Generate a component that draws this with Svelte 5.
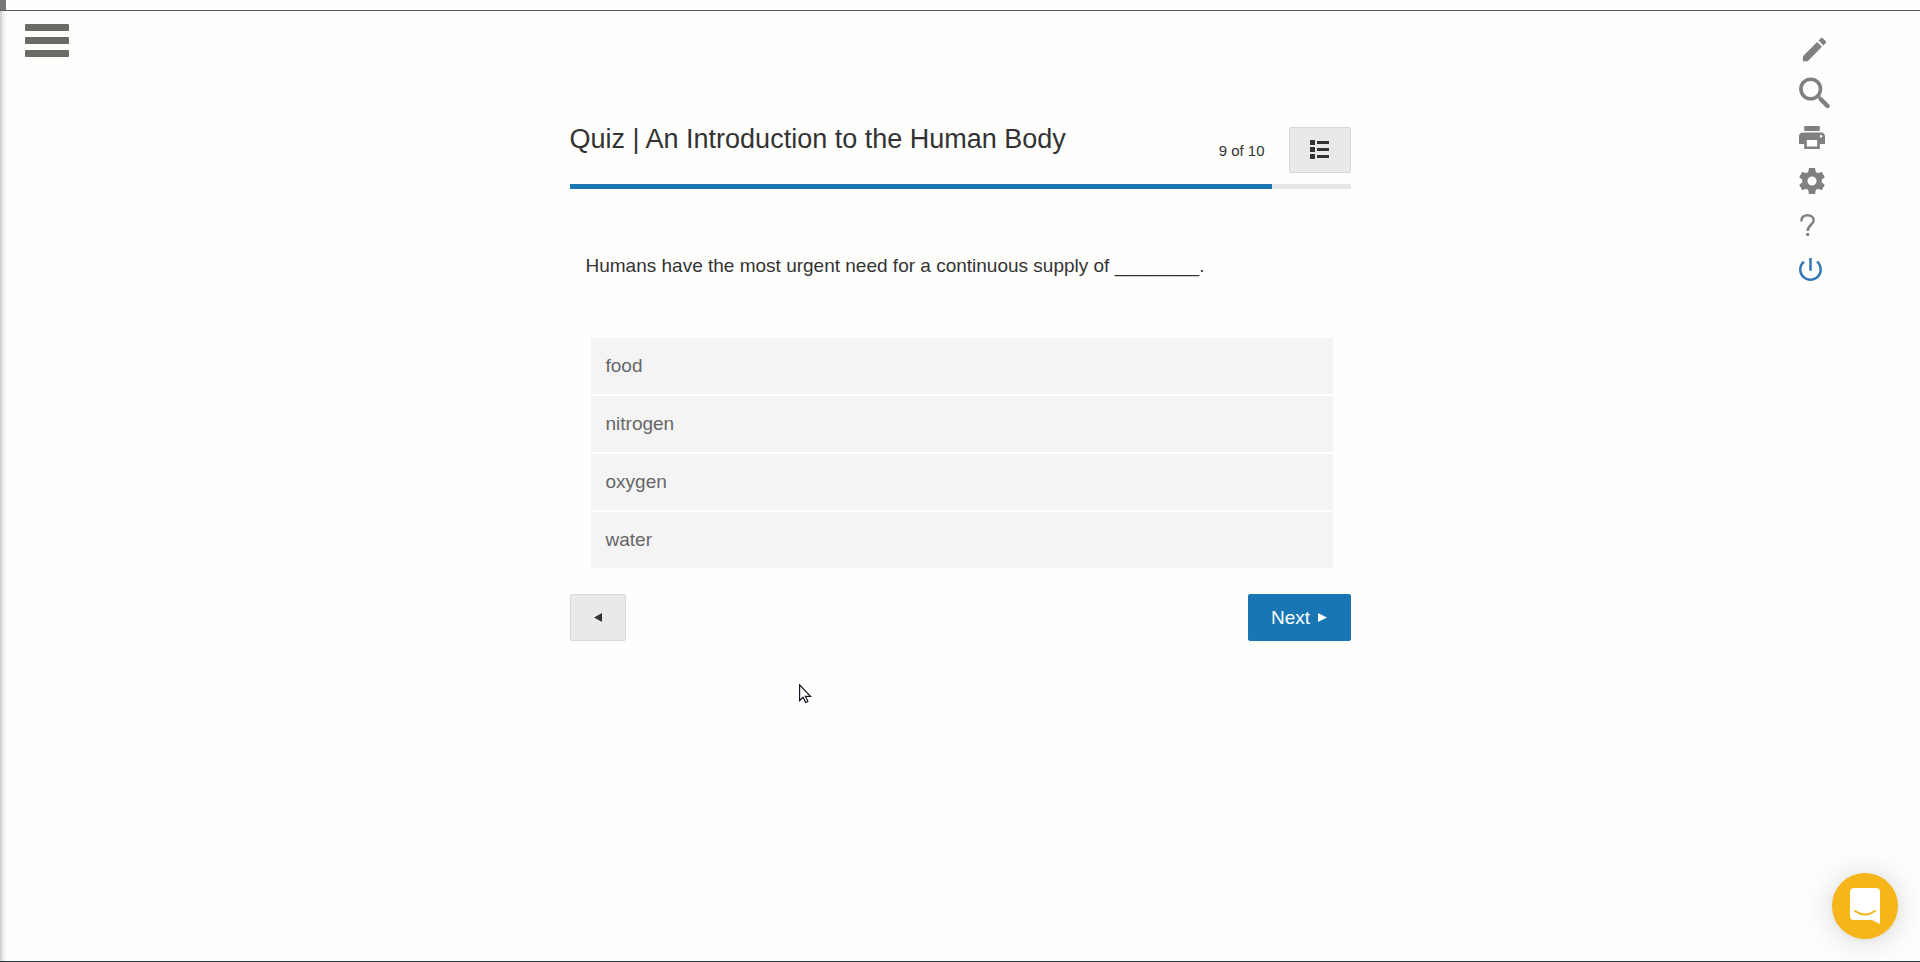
<script lang="ts">
  const total = 10;
  const answers = ["food", "nitrogen", "oxygen", "water"];

  let current: number = $state(9);
  let selected: string = $state("");
  let progress: number = $derived((current / total) * 100);

  function goPrev() {
    if (current > 1) current -= 1;
  }

  function goNext() {
    if (current < total) current += 1;
  }
</script>

<div class="page">
  <div class="top-strip"><div class="strip-corner"></div></div>

  <div class="content">
    <div class="left-side">
      <button class="menu-btn" aria-label="Menu">
        <span></span>
        <span></span>
        <span></span>
      </button>
    </div>

    <main class="quiz">
      <header class="quiz-header">
        <h1>Quiz | An Introduction to the Human Body</h1>
        <div class="quiz-status">
          <span class="count">{current} of {total}</span>
          <button class="btn list-btn" aria-label="Question list">
            <svg width="20" height="20" viewBox="0 0 20 20" fill="#333">
              <path d="M0 0h5v5H0zM0 7h5v5H0zM0 14h5v5H0zM7 1h12v3H7zM7 8h12v3H7zM7 15h12v3H7z" />
            </svg>
          </button>
        </div>
      </header>
      <div class="progress"><div class="progress-fill" style="width: {progress}%;"></div></div>

      <p class="question" id="question">Humans have the most urgent need for a continuous supply of ________.</p>

      <div class="answers" role="radiogroup" aria-labelledby="question">
        {#each answers as a}
          <label class="answer">
            <input type="radio" name="answer" value={a} bind:group={selected} />
            {a}
          </label>
        {/each}
      </div>

      <div class="nav">
        <button class="btn prev-btn" aria-label="Previous" onclick={goPrev}>
          <svg width="8" height="9" viewBox="0 0 8 9"><path fill="#333" d="M8 0v9L0 4.500z" /></svg>
        </button>
        <button class="btn next-btn" onclick={goNext}>
          Next
          <svg width="9" height="9" viewBox="0 0 9 9"><path fill="#fff" d="M0 0v9l9-4.500z" /></svg>
        </button>
      </div>
    </main>

    <div class="tools">
      <button aria-label="Edit">
        <svg width="31" height="31" viewBox="0 0 24 24">
          <path d="M3 17.250V21h3.750L17.810 9.940l-3.750-3.750L3 17.250zM20.710 7.040c.39-.39.39-1.020 0-1.410l-2.340-2.340c-.39-.39-1.020-.39-1.410 0l-1.830 1.830 3.750 3.750 1.830-1.830z" />
        </svg>
      </button>
      <button aria-label="Search">
        <svg width="32" height="32" viewBox="0 0 32 32" fill="none" stroke="#808080">
          <circle cx="11.700" cy="12" r="9.800" stroke-width="3.600" />
          <path d="M19 19l3 3" stroke-width="3" />
          <path d="M22 22.500l6.500 6.500" stroke-width="4.500" stroke-linecap="round" />
        </svg>
      </button>
      <button aria-label="Print">
        <svg width="26" height="23" viewBox="2 3 20 18" preserveAspectRatio="none">
          <path d="M19 8H5c-1.660 0-3 1.340-3 3v6h4v4h12v-4h4v-6c0-1.660-1.340-3-3-3zm-3 11H8v-5h8v5zm3-7c-.55 0-1-.45-1-1s.45-1 1-1 1 .45 1 1-.45 1-1 1zm-1-9H6v4h12V3z" />
        </svg>
      </button>
      <button aria-label="Settings">
        <svg width="26" height="26" viewBox="2 2 20 20">
          <path d="M19.430 12.980c.04-.32.07-.64.07-.98s-.03-.66-.07-.98l2.110-1.650c.19-.15.24-.42.12-.64l-2-3.460c-.12-.22-.39-.3-.61-.22l-2.490 1c-.52-.4-1.080-.73-1.690-.98l-.38-2.650C14.460 2.180 14.250 2 14 2h-4c-.25 0-.46.18-.49.42l-.38 2.650c-.61.25-1.170.59-1.690.98l-2.490-1c-.23-.09-.49 0-.61.22l-2 3.460c-.13.22-.07.49.12.64l2.110 1.650c-.04.32-.07.65-.07.98s.03.66.07.98l-2.110 1.650c-.19.15-.24.42-.12.64l2 3.460c.12.22.39.3.61.22l2.490-1c.52.4 1.080.73 1.690.98l.38 2.650c.03.24.24.42.49.42h4c.25 0 .46-.18.49-.42l.38-2.650c.61-.25 1.170-.59 1.690-.98l2.490 1c.23.09.49 0 .61-.22l2-3.460c.12-.22.07-.49-.12-.64l-2.110-1.650zM12 15.500c-1.930 0-3.500-1.570-3.500-3.500s1.570-3.500 3.500-3.500 3.500 1.570 3.500 3.500-1.570 3.500-3.500 3.500z" />
        </svg>
      </button>
      <button aria-label="Help">
        <svg width="17" height="24" viewBox="0 0 17 24" fill="none" stroke="#808080">
          <path d="M2.300 8.500C2.300 4 5 2.200 8.500 2.200s6.200 2 6.200 5c0 4.500-6 4.800-6 10.800" stroke-width="2.400" />
          <path d="M7.200 21.500h3" stroke-width="3" />
        </svg>
      </button>
      <button class="power" aria-label="Log out">
        <svg width="23" height="23" viewBox="3 3 18 18">
          <path d="M13 3h-2v10h2V3zm4.830 2.170l-1.420 1.420C17.990 7.860 19 9.810 19 12c0 3.870-3.130 7-7 7s-7-3.130-7-7c0-2.190 1.010-4.140 2.580-5.420L6.170 5.170C4.230 6.820 3 9.260 3 12c0 4.970 4.030 9 9 9s9-4.030 9-9c0-2.740-1.230-5.180-3.170-6.830z" />
        </svg>
      </button>
    </div>
  </div>

  <button class="chat" aria-label="Open chat">
    <svg width="30" height="37" viewBox="0 0 30 37">
      <path fill="#fff" d="M4 0h22a4 4 0 0 1 4 4v32l-8-4H4a4 4 0 0 1-4-4V4a4 4 0 0 1 4-4z" />
      <path fill="none" stroke="#f6b519" stroke-width="2" stroke-linecap="round" d="M5 23q10 7 20 0" />
    </svg>
  </button>

  <svg class="cursor" width="13" height="20" viewBox="0 0 13 20">
    <path fill="#fff" stroke="#10141f" stroke-width="1.200" d="M.6.800v15.700l3.500-3.300 2.500 5.300 2.300-1-2.400-5.100h5z" />
  </svg>
</div>

<style>
  :global(body) {
    margin: 0;
    background: #fefefd;
  }

  .page {
    position: relative;
    box-sizing: border-box;
    display: flex;
    flex-direction: column;
    min-height: 100vh;
    border-bottom: 1px solid #2f3a3d;
    font-family: "Liberation Sans", Arial, sans-serif;
    color: #333;
  }

  button {
    padding: 0;
    border: none;
    background: none;
    font-family: inherit;
    cursor: pointer;
  }

  svg {
    display: block;
  }

  .top-strip {
    height: 10px;
    border-bottom: 1px solid #5c5c5c;
  }

  .strip-corner {
    width: 6px;
    height: 100%;
    background: #777;
  }

  .content {
    flex: 1;
    display: grid;
    grid-template-columns: 1fr minmax(0, 781px) 1fr;
    background: linear-gradient(to right, #c8c8c8, #ececec 3px, #fefefd 7px);
  }

  .left-side {
    padding: 13px 25px;
  }

  .menu-btn {
    display: flex;
    flex-direction: column;
    gap: 6px;
  }

  .menu-btn span {
    width: 44px;
    height: 7px;
    border-radius: 1px;
    background: #6a6b67;
  }

  .quiz {
    padding-top: 116px;
  }

  .quiz-header {
    display: flex;
    justify-content: space-between;
    align-items: flex-start;
    padding-bottom: 11px;
  }

  h1 {
    margin: 0;
    font-size: 27px;
    font-weight: 400;
    line-height: 25px;
  }

  .quiz-status {
    display: flex;
    align-items: center;
    gap: 24px;
    font-size: 15px;
  }

  .btn {
    box-sizing: border-box;
    display: flex;
    align-items: center;
    justify-content: center;
    height: 47px;
    border: 1px solid #d6d7da;
    border-radius: 2px;
    background: #e9e9e9;
  }

  .list-btn {
    width: 62px;
    height: 46px;
  }

  .progress {
    height: 5px;
    background: #e6e6e6;
  }

  .progress-fill {
    height: 100%;
    background: #1976b4;
  }

  .question {
    margin: 64px 16px 59px;
    font-size: 19px;
    line-height: 26px;
  }

  .answers {
    display: flex;
    flex-direction: column;
    gap: 2px;
    margin: 0 18px 0 21px;
  }

  .answer {
    display: flex;
    align-items: center;
    height: 56px;
    padding: 0 15px;
    background: #f4f4f5;
    color: #666;
    font-size: 19px;
    cursor: pointer;
  }

  .answer input {
    appearance: none;
    width: 0;
    margin: 0;
  }

  .answer:has(input:checked) {
    background: #dcebf5;
  }

  .nav {
    display: flex;
    justify-content: space-between;
    margin-top: 26px;
  }

  .prev-btn {
    width: 56px;
  }

  .next-btn {
    gap: 8px;
    width: 103px;
    border-color: #1976b4;
    background: #1976b4;
    color: #fff;
    font-size: 19px;
  }

  .tools {
    justify-self: end;
    display: flex;
    flex-direction: column;
    width: 32px;
    padding: 16px 89px 0 0;
  }

  .tools button {
    display: flex;
    align-items: center;
    height: 44px;
    fill: #808080;
  }

  .tools .power {
    fill: #337ab7;
  }

  .chat {
    position: fixed;
    right: 22px;
    bottom: 23px;
    display: flex;
    align-items: center;
    justify-content: center;
    width: 66px;
    height: 66px;
    border-radius: 50%;
    background: #f6b519;
    box-shadow: 0 1px 6px rgba(0, 0, 0, 0.06), 0 2px 32px rgba(0, 0, 0, 0.16);
  }

  .cursor {
    position: absolute;
    top: 684px;
    left: 799px;
  }
</style>
